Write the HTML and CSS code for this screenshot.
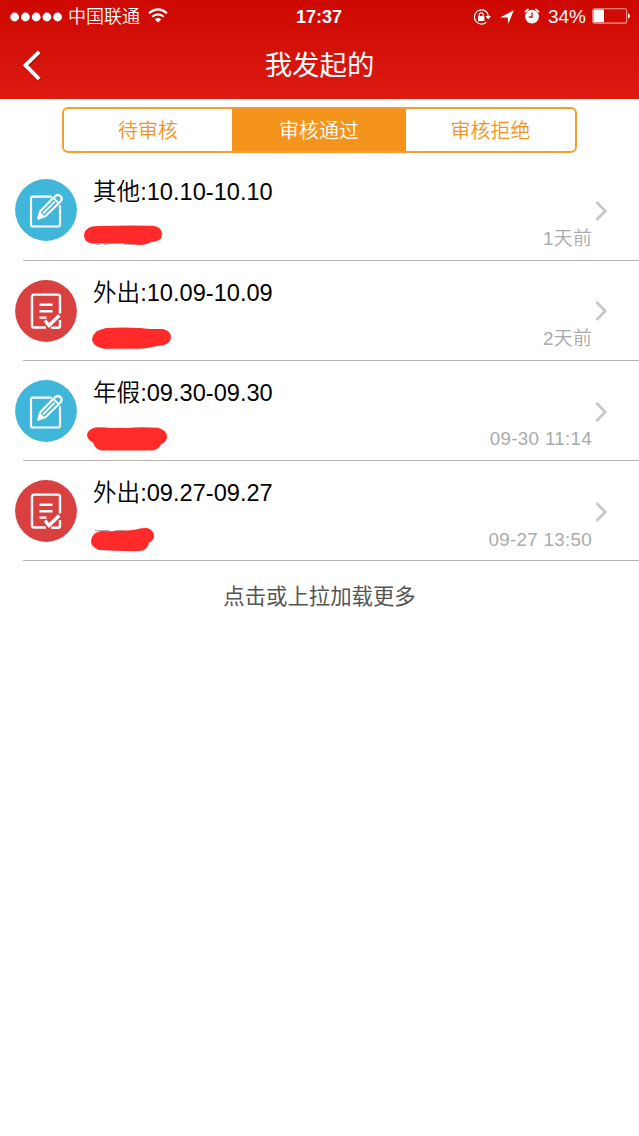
FILE: index.html
```html
<!DOCTYPE html>
<html lang="zh-CN">
<head>
<meta charset="utf-8">
<title>我发起的</title>
<link rel="stylesheet" href="styles.css">
</head>
<body>
<svg class="symbols" aria-hidden="true">
  <symbol id="edit" viewBox="0 0 62 62">
    <circle cx="31" cy="31" r="30.9" fill="#3fb6da"/>
    <g fill="none" stroke="#fff" stroke-width="2.2" stroke-linejoin="round" stroke-linecap="round">
      <path d="M36 17.7H18Q16 17.7 16 19.7V45.5Q16 47.5 18 47.5H43Q45 47.5 45 45.5V27"/>
      <path d="M23.5 39.5L25.3 32.3L40.2 17.1Q43 14.8 45.6 17.3Q48 19.8 45.5 22.5L30.3 37.2Z"/>
      <path d="M38.5 19L43.7 24.2M28.5 34L39.3 23.1" stroke-width="1.8"/>
      <path d="M23.5 39.5L25 34.5L28 37.5Z" fill="#fff"/>
    </g>
  </symbol>
  <symbol id="form" viewBox="0 0 62 62">
    <circle cx="31" cy="31" r="30.9" fill="#d94141"/>
    <g fill="none" stroke="#fff" stroke-width="2.4" stroke-linejoin="round">
      <path d="M31 47.5H19Q17 47.5 17 45.5V17Q17 14.6 19 14.6H43Q45 14.6 45 17V33.5M36 47.8H43Q45 47.8 45 45.5V40"/>
      <path d="M24.5 24.8H37.5M24.5 31.3H37.5M24.5 37.6H31.5"/>
      <path d="M30 40.5L34 45.5L44.3 35.5" stroke-width="3.4" stroke-linejoin="miter"/>
    </g>
  </symbol>
  <symbol id="chevron" viewBox="0 0 14 22">
    <path d="M2.4 2L11.2 11L2.4 20" fill="none" stroke="#c7c7cc" stroke-width="2.8"/>
  </symbol>
</svg>
<header class="header">
  <div class="status">
    <div class="status-left">
      <svg class="signal" viewBox="0 0 52 10"><g fill="#fff"><circle cx="4.6" cy="5" r="4.4"/><circle cx="15.4" cy="5" r="4.4"/><circle cx="26.2" cy="5" r="4.4"/><circle cx="36.9" cy="5" r="4.4"/><circle cx="47.6" cy="5" r="4.4"/></g></svg>
      <span class="carrier">中国联通</span>
      <svg class="wifi" viewBox="0 0 20 15"><g fill="none" stroke="#fff" stroke-width="2.1"><path d="M1 5.3Q10 -2.5 19 5.3"/><path d="M4.2 8.8Q10 3.8 15.8 8.8"/></g><path d="M6.8 11.4Q10 8.6 13.2 11.4L10 14.6Z" fill="#fff"/></svg>
    </div>
    <span class="clock">17:37</span>
    <div class="status-right">
      <svg class="lock" viewBox="0 0 18 16"><path d="M14 3.5A7.1 7.1 0 1 0 13.3 13.3M14 3.5Q15.2 5.2 15.3 7.5" fill="none" stroke="#fff" stroke-width="1.2"/><path d="M12.5 7H18L15.2 10.5Z" fill="#fff"/><rect x="5" y="7" width="6.4" height="5" rx=".5" fill="#fff"/><path d="M6.2 7V5.6Q6.2 3.9 8.2 3.9Q10.2 3.9 10.2 5.6V7" fill="none" stroke="#fff" stroke-width="1.1"/></svg>
      <svg class="arrow" viewBox="0 0 14 14"><path d="M13.8 .2L8.4 13.8L7.6 7.6L.2 7.6Z" fill="#fff"/></svg>
      <svg class="alarm" viewBox="0 0 16 16"><circle cx="8" cy="8.6" r="6.9" fill="#fff"/><path d="M1.4 3.6L4 1.4M14.6 3.6L12 1.4" stroke="#fff" stroke-width="1.7" stroke-linecap="round"/><path d="M8 4.5V9H4.8" fill="none" stroke="#d20b05" stroke-width="1.3"/></svg>
      <span class="percent">34%</span>
      <svg class="battery" viewBox="0 0 38 16"><rect x=".7" y=".7" width="34" height="14.4" rx="2" fill="none" stroke="#f19b98" stroke-width="1.1"/><rect x="1.5" y="1.5" width="10.5" height="12.8" rx="1" fill="#fff"/><path d="M36 5.3Q38 6.5 38 8Q38 9.5 36 10.7Z" fill="#fff"/></svg>
    </div>
  </div>
  <div class="nav">
    <svg class="back" viewBox="0 0 20 34"><path d="M18 4L5 17L18 31" fill="none" stroke="#8c0905" stroke-opacity=".7" stroke-width="3.6"/><path d="M17.2 2.8L3.5 16.2L17.2 30" fill="none" stroke="#fff" stroke-width="3.8"/></svg>
    <h1 class="title">我发起的</h1>
  </div>
</header>
<main>
  <div class="tabs">
    <span class="tab">待审核</span>
    <span class="tab tab-active">审核通过</span>
    <span class="tab">审核拒绝</span>
  </div>
  <ul class="list">
    <li class="row">
      <svg class="avatar"><use href="#edit"/></svg>
      <div class="body">
        <span class="name">其他:10.10-10.10</span>
        <svg class="scribble" viewBox="80 220 100 36"><path d="M96 245.4H100M104 245.4H108M124 245.4H134" stroke="#aaa" stroke-width="1"/><path d="M92 227.5Q97 226.8 100 227Q125 226 153 226.7Q162 228 162 235Q162 243 151 243Q147 246 139 246Q132 245 123 244.5H92Q84 243 84 236Q84 230 92 227.5Z"/></svg>
      </div>
      <time class="time">1天前</time>
      <svg class="chevron"><use href="#chevron"/></svg>
    </li>
    <li class="row">
      <svg class="avatar"><use href="#form"/></svg>
      <div class="body">
        <span class="name">外出:10.09-10.09</span>
        <svg class="scribble" viewBox="80 320.3 100 36"><path d="M96 331.5H101" stroke="#aaa"/><path d="M106 328.2Q122 327.5 140 328.2L150 329.2H163Q171 331 171 338Q170 345 160 346L153 347Q147 349 139 349L104 349Q92 347 92 339Q93 331 106 328.2Z"/></svg>
      </div>
      <time class="time">2天前</time>
      <svg class="chevron"><use href="#chevron"/></svg>
    </li>
    <li class="row">
      <svg class="avatar"><use href="#edit"/></svg>
      <div class="body">
        <span class="name">年假:09.30-09.30</span>
        <svg class="scribble" viewBox="80 420.6 100 36"><path d="M95 428Q103 427.6 111 428.7Q119 428 127 428.5Q140 427.5 158 428.3Q167 431 167 437Q167 442 161 445Q158 451 151 451H102Q95 450 93 443Q87 440 87 435Q88 430 95 428Z"/></svg>
      </div>
      <time class="time">09-30 11:14</time>
      <svg class="chevron"><use href="#chevron"/></svg>
    </li>
    <li class="row">
      <svg class="avatar"><use href="#form"/></svg>
      <div class="body">
        <span class="name">外出:09.27-09.27</span>
        <svg class="scribble" viewBox="80 520.9 100 36"><path d="M95 531.6H109M115 531.4H124M132 531.2H137" stroke="#aaa" stroke-width="1.2"/><path d="M102 532Q118 532.5 134 531Q142 528.5 147 529Q154 531 154 537Q154 541 149 544Q147 552 139 552Q120 552.3 99 551Q91 548 91 542Q92 533 102 532Z"/></svg>
      </div>
      <time class="time">09-27 13:50</time>
      <svg class="chevron"><use href="#chevron"/></svg>
    </li>
  </ul>
  <div class="more">点击或上拉加载更多</div>
</main>
</body>
</html>
```

FILE: styles.css
```css
* { box-sizing: border-box; }
body {
  margin: 0;
  background: #fff;
  font-family: "Liberation Sans", "Noto Sans CJK SC", sans-serif;
  font-weight: 350;
}
svg { display: block; flex: none; }
.symbols { position: absolute; width: 0; height: 0; }
.header {
  height: 99px;
  background: linear-gradient(#cc0800, #dd1b12);
  color: #fff;
}
.status {
  display: grid;
  grid-template-columns: 1fr auto 1fr;
  align-items: center;
  height: 32px;
  padding: 0 9px 0 10px;
}
.status-left, .status-right { display: flex; align-items: center; }
.status-right { justify-content: flex-end; }
.signal { width: 52px; height: 10px; }
.carrier { margin-left: 6px; font-size: 18px; line-height: 32px; }
.wifi { width: 20px; height: 15px; margin-left: 8px; margin-top: -2px; }
.clock { margin-left: -2px; font-size: 18px; font-weight: 700; line-height: 32px; }
.lock { width: 18px; height: 16px; }
.arrow { width: 14px; height: 14px; margin-left: 9px; }
.alarm { width: 16px; height: 16px; margin-left: 10px; margin-top: -1px; }
.percent { margin-left: 8px; font-size: 19px; line-height: 32px; padding-top: 1px; }
.battery { width: 38px; height: 16px; margin-left: 6px; margin-top: -1px; }
.nav {
  display: grid;
  grid-template-columns: 40px 1fr 40px;
  align-items: center;
  height: 67px;
  padding: 0 22px;
}
.back { width: 20px; height: 34px; }
.title {
  margin: 0;
  text-align: center;
  font-size: 27.4px;
  font-weight: 400;
  line-height: 67px;
}
.tabs {
  display: grid;
  grid-template-columns: 168px 174px 1fr;
  width: 515px;
  height: 46px;
  margin: 8px auto 0;
  overflow: hidden;
  border: 2px solid #f59d30;
  border-radius: 6px;
}
.tab {
  color: #f4941c;
  font-size: 20px;
  line-height: 44px;
  text-align: center;
}
.tab-active { background: #f4941c; color: #fff; }
.list { margin: 7.6px 0 0; padding: 0; list-style: none; }
.row {
  display: flex;
  height: 100.3px;
  padding: 18.8px 31px 0 15px;
  background: linear-gradient(#b4b4b4, #b4b4b4) 23px 100% / 100% 1.3px no-repeat;
}
.avatar { width: 62px; height: 62px; }
.body { flex: 1; }
.name {
  display: block;
  height: 40px;
  padding-left: 16px;
  color: #000;
  font-size: 23.6px;
  line-height: 26px;
}
.scribble { width: 100px; height: 36px; margin-left: 3px; fill: #ff2b2b; }
.time {
  padding-top: 46.4px;
  color: #aaa;
  font-size: 18.8px;
  line-height: 26px;
  letter-spacing: .3px;
}
.chevron { width: 14px; height: 22px; margin: 20.6px 0 0 2px; }
.more {
  margin-top: 19px;
  color: #555;
  font-size: 21.4px;
  font-weight: 400;
  line-height: 32px;
  text-align: center;
}
```
